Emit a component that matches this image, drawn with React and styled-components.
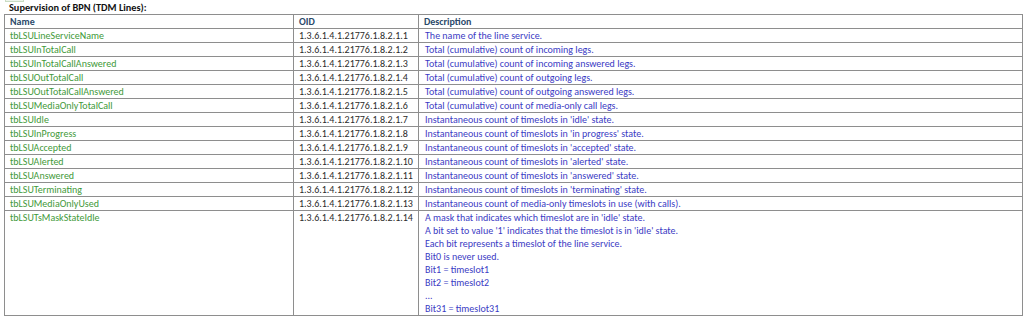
import React from 'react'
import styled, { createGlobalStyle } from 'styled-components'

const GlobalStyle = createGlobalStyle`
    body {
        margin: 0;
        background: #ffffff;
        font-family: 'Carlito', 'Lato', 'Liberation Sans', sans-serif;
    }
`

const rows = [
    ['tbLSULineServiceName', '1.3.6.1.4.1.21776.1.8.2.1.1', ['The name of the line service.']],
    ['tbLSUInTotalCall', '1.3.6.1.4.1.21776.1.8.2.1.2', ['Total (cumulative) count of incoming legs.']],
    ['tbLSUInTotalCallAnswered', '1.3.6.1.4.1.21776.1.8.2.1.3', ['Total (cumulative) count of incoming answered legs.']],
    ['tbLSUOutTotalCall', '1.3.6.1.4.1.21776.1.8.2.1.4', ['Total (cumulative) count of outgoing legs.']],
    ['tbLSUOutTotalCallAnswered', '1.3.6.1.4.1.21776.1.8.2.1.5', ['Total (cumulative) count of outgoing answered legs.']],
    ['tbLSUMediaOnlyTotalCall', '1.3.6.1.4.1.21776.1.8.2.1.6', ['Total (cumulative) count of media-only call legs.']],
    ['tbLSUIdle', '1.3.6.1.4.1.21776.1.8.2.1.7', ["Instantaneous count of timeslots in 'idle' state."]],
    ['tbLSUInProgress', '1.3.6.1.4.1.21776.1.8.2.1.8', ["Instantaneous count of timeslots in 'in progress' state."]],
    ['tbLSUAccepted', '1.3.6.1.4.1.21776.1.8.2.1.9', ["Instantaneous count of timeslots in 'accepted' state."]],
    ['tbLSUAlerted', '1.3.6.1.4.1.21776.1.8.2.1.10', ["Instantaneous count of timeslots in 'alerted' state."]],
    ['tbLSUAnswered', '1.3.6.1.4.1.21776.1.8.2.1.11', ["Instantaneous count of timeslots in 'answered' state."]],
    ['tbLSUTerminating', '1.3.6.1.4.1.21776.1.8.2.1.12', ["Instantaneous count of timeslots in 'terminating' state."]],
    ['tbLSUMediaOnlyUsed', '1.3.6.1.4.1.21776.1.8.2.1.13', ['Instantaneous count of media-only timeslots in use (with calls).']],
    ['tbLSUTsMaskStateIdle', '1.3.6.1.4.1.21776.1.8.2.1.14', [
        "A mask that indicates which timeslot are in 'idle' state.",
        "A bit set to value '1' indicates that the timeslot is in 'idle' state.",
        'Each bit represents a timeslot of the line service.',
        'Bit0 is never used.',
        'Bit1 = timeslot1',
        'Bit2 = timeslot2',
        '...',
        'Bit31 = timeslot31',
    ]],
]

const App = () => {
    return (
        <Page>
            <GlobalStyle />
            <Marker />
            <Title>Supervision of BPN (TDM Lines):</Title>
            <Table>
                <colgroup>
                    <col style={{ width: '289px' }} />
                    <col style={{ width: '125px' }} />
                    <col />
                </colgroup>
                <thead>
                    <tr>
                        <Th>Name</Th>
                        <Th>OID</Th>
                        <Th>Description</Th>
                    </tr>
                </thead>
                <tbody>
                    {rows.map(([name, oid, desc]) => (
                        <tr key={oid}>
                            <Td $kind="name">{name}</Td>
                            <Td $kind="oid">{oid}</Td>
                            <Td $kind="desc">
                                {desc.map((line, i) => (
                                    <Line key={i}>{line}</Line>
                                ))}
                            </Td>
                        </tr>
                    ))}
                </tbody>
            </Table>
        </Page>
    )
}

export default App

const colors = {
    name: '#3f9a3a',
    oid: '#2b2b2b',
    desc: '#3b3bc4',
}

const Page = styled.div`
    width: 1024px;
    padding: 0 1px 0 4px;
    box-sizing: border-box;
`

const Marker = styled.div`
    width: 17px;
    height: 1px;
    margin-left: 1px;
    border: 1px solid #c9dcc4;
    border-top: none;
    background: #eef5ec;
`

const Title = styled.div`
    height: 12px;
    line-height: 11px;
    padding-left: 5px;
    font-size: 10.3px;
    font-weight: 700;
    color: #111111;
`

const Table = styled.table`
    width: 1019px;
    border-collapse: collapse;
    table-layout: fixed;
    font-size: 10px;
`

const Th = styled.th`
    height: 13px;
    padding: 0 5px;
    text-align: left;
    line-height: 13px;
    font-weight: 700;
    color: #2c4a6a;
    border: 1px solid #8e8e8e;
    white-space: nowrap;
`

const Td = styled.td`
    height: 13px;
    padding: 0 ${(p) => (p.$kind === 'desc' ? '6px' : '5px')};
    vertical-align: top;
    line-height: 13px;
    color: ${(p) => colors[p.$kind]};
    border: 1px solid #8e8e8e;
    white-space: nowrap;
`

const Line = styled.div`
    line-height: 13px;
`
